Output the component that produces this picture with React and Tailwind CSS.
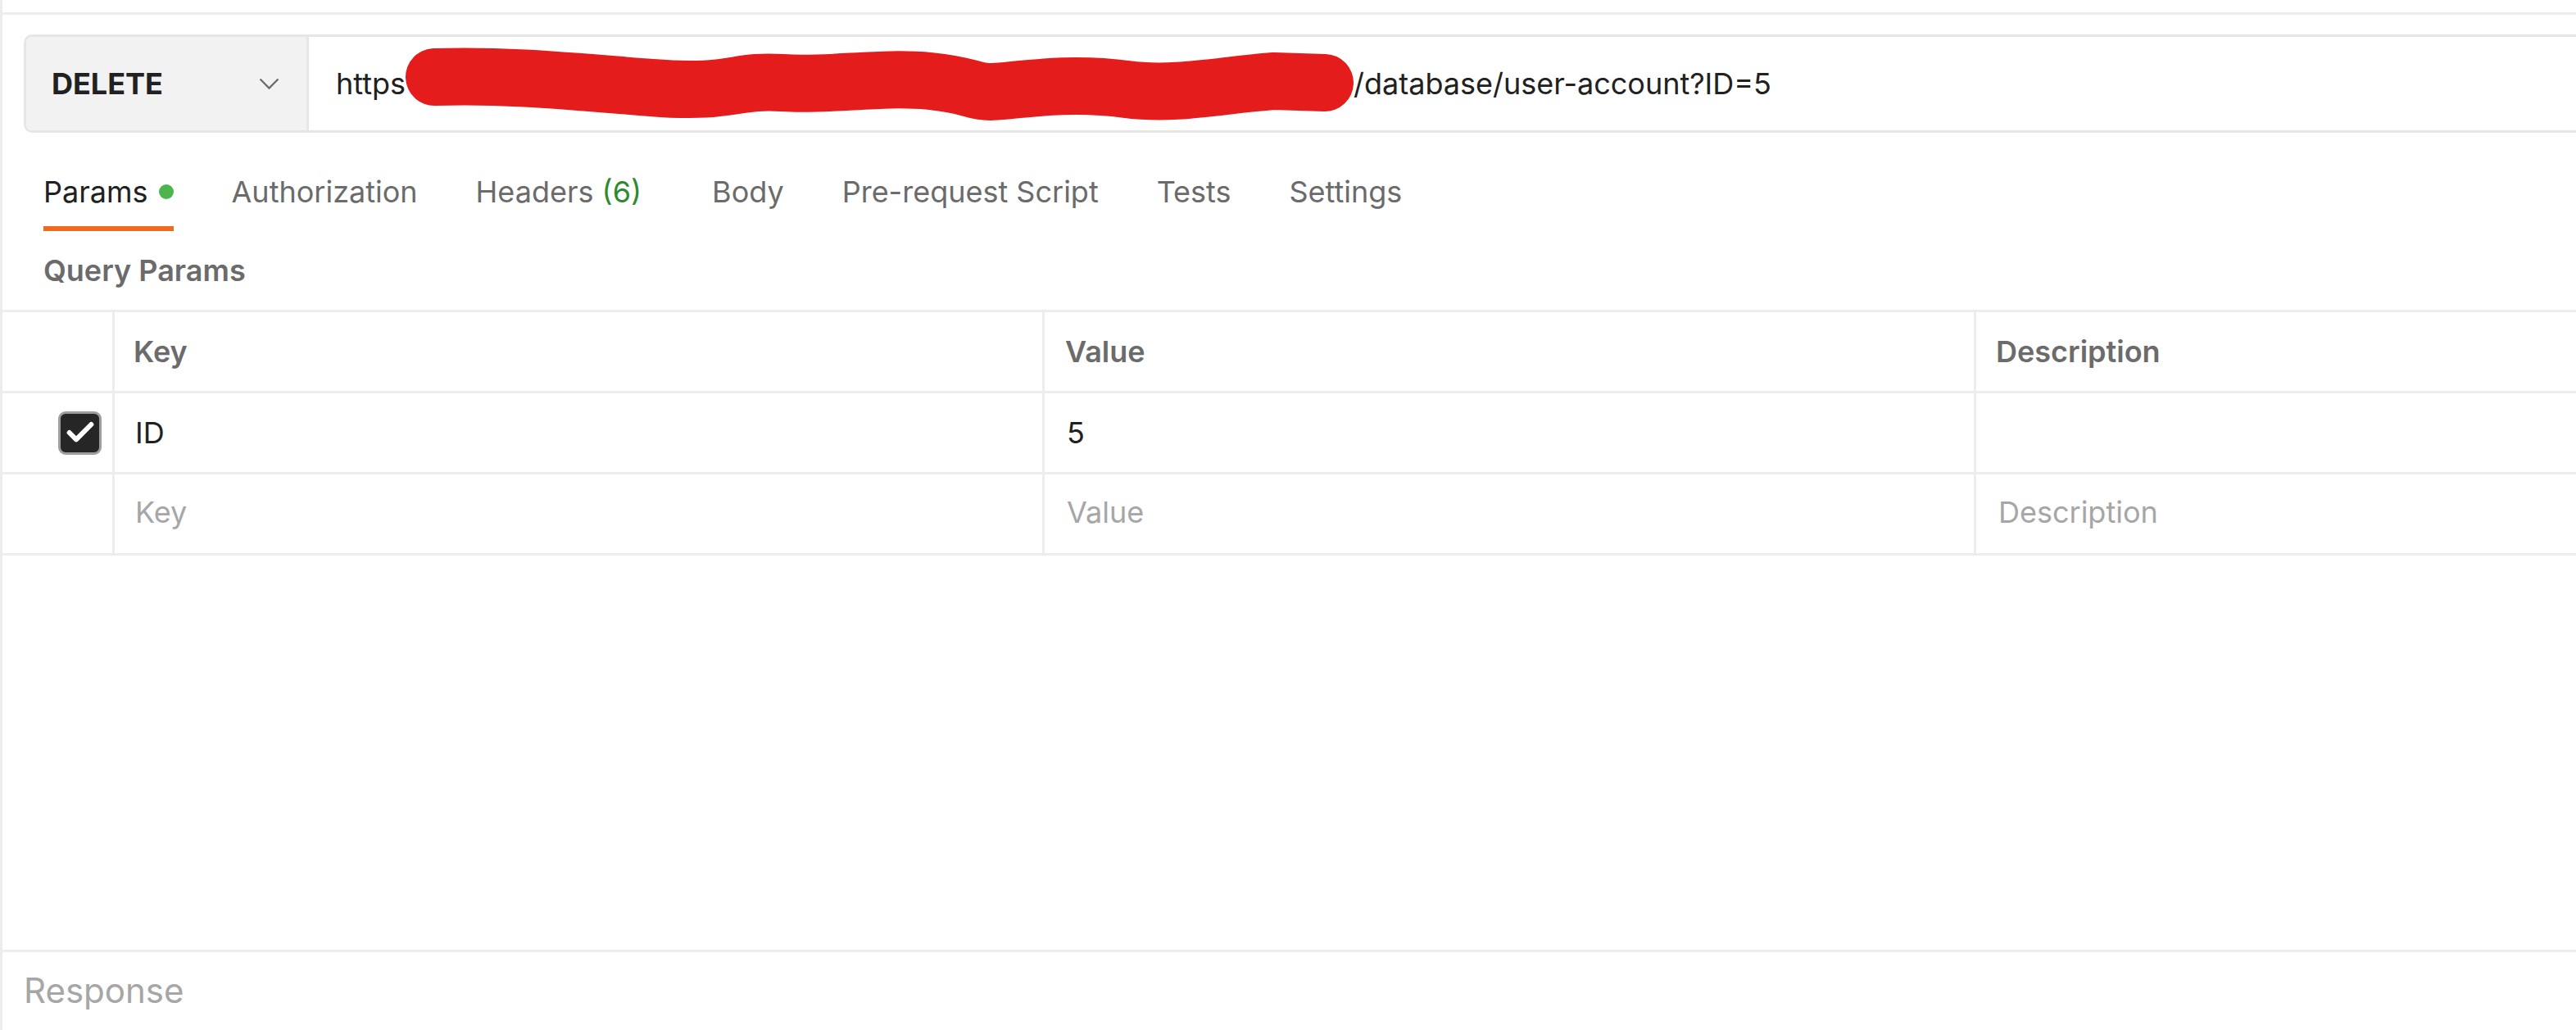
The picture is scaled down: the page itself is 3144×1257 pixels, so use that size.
import { Check } from 'lucide-react'

const tabs = [
  { label: 'Params', active: true, dot: true },
  { label: 'Authorization' },
  { label: 'Headers', count: 6 },
  { label: 'Body' },
  { label: 'Pre-request Script' },
  { label: 'Tests' },
  { label: 'Settings' },
]

const params = [{ key: 'ID', value: '5', description: '', enabled: true }]

export default function RequestBuilder() {
  return (
    <div className="h-[1257px] w-full overflow-hidden bg-white border-l-[3px] border-[#ececec] font-['Inter','Liberation_Sans',sans-serif] flex flex-col">
      {/* Request area */}
      <div className="flex-1 mt-[15px] border-t-[3px] border-[#ededed]">
        {/* URL bar */}
        <div className="mt-[24px] ml-[26px] flex h-[120px] border-[3px] border-r-0 border-[#e6e6e6] rounded-l-[10px] overflow-hidden">
          <div className="w-[345px] shrink-0 bg-[#f2f2f2] border-r-[3px] border-[#e6e6e6] flex items-center justify-between pl-[31px] pr-[33px]">
            <span className="text-[36px] leading-[44px] font-bold text-[#212121]">DELETE</span>
            <svg width="25" height="15" viewBox="0 0 25 15" fill="none">
              <polyline points="1.5,1.5 12.5,12.5 23.5,1.5" stroke="#6b6b6b" strokeWidth="2.3" />
            </svg>
          </div>
          <div className="flex items-center pl-[33px] text-[36px] leading-[44px] text-[#212121] whitespace-nowrap">
            <span>https</span>
            {/* redaction scribble */}
            <svg width="1157" height="110" viewBox="0 0 1157 110" className="shrink-0">
              <path
                d="M35 47 C 120 44, 200 52, 300 60 S 400 50, 460 54 S 580 46, 640 52 S 690 68, 730 64 S 820 54, 880 62 S 1000 56, 1060 52 L 1122 54"
                fill="none"
                stroke="#e41c1c"
                strokeWidth="70"
                strokeLinecap="round"
                strokeLinejoin="round"
              />
            </svg>
            <span>/database/user-account?ID=5</span>
          </div>
        </div>

        {/* Tabs */}
        <div className="mt-[50px] pl-[50px] flex gap-[71px]">
          {tabs.map((tab) => (
            <div key={tab.label} className={`flex flex-col ${tab.count ? 'mr-[15px]' : ''}`}>
              <div
                className={`flex items-center h-[44px] text-[36px] leading-[44px] whitespace-nowrap ${
                  tab.active ? 'text-[#212121]' : 'text-[#6b6b6b]'
                }`}
              >
                {tab.label}
                {tab.count && <span className="ml-[10px] text-[#2f8a2f]">({tab.count})</span>}
                {tab.dot && <span className="ml-[13px] w-[18px] h-[18px] rounded-full bg-[#4bb64b]" />}
              </div>
              <div className={`mt-[20px] h-[6px] ${tab.active ? 'bg-[#ee6b1e]' : ''}`} />
            </div>
          ))}
        </div>

        {/* Query params */}
        <div className="mt-[26px] pl-[50px] text-[36px] leading-[44px] font-semibold text-[#6b6b6b]">Query Params</div>

        <div className="mt-[26px] border-t-[3px] border-[#ededed]">
          <div className="grid grid-cols-[137px_1135px_1137px_1fr] h-[99px] border-b-[3px] border-[#ededed] text-[36px] leading-[44px] font-semibold text-[#6b6b6b]">
            <div className="border-r-[3px] border-[#ededed]" />
            <div className="border-r-[3px] border-[#ededed] flex items-center pl-[23px]">Key</div>
            <div className="border-r-[3px] border-[#ededed] flex items-center pl-[25px]">Value</div>
            <div className="flex items-center pl-[24px]">Description</div>
          </div>

          {params.map((p) => (
            <div
              key={p.key}
              className="grid grid-cols-[137px_1135px_1137px_1fr] h-[99px] border-b-[3px] border-[#ededed] text-[36px] leading-[44px] text-[#212121]"
            >
              <div className="border-r-[3px] border-[#ededed] flex items-center justify-end pr-[13px]">
                <div className="w-[53px] h-[53px] rounded-[9px] border-[3px] border-[#9e9e9e] bg-[#262626] flex items-center justify-center">
                  <Check size={40} strokeWidth={3.6} className="text-white" />
                </div>
              </div>
              <div className="border-r-[3px] border-[#ededed] flex items-center pl-[25px]">{p.key}</div>
              <div className="border-r-[3px] border-[#ededed] flex items-center pl-[27px]">{p.value}</div>
              <div className="flex items-center pl-[27px]">{p.description}</div>
            </div>
          ))}

          {/* Empty row */}
          <div className="grid grid-cols-[137px_1135px_1137px_1fr] h-[99px] border-b-[3px] border-[#ededed] text-[36px] leading-[44px] text-[#a6a6a6]">
            <div className="border-r-[3px] border-[#ededed]" />
            <div className="border-r-[3px] border-[#ededed] flex items-center pl-[25px] pb-[5px]">Key</div>
            <div className="border-r-[3px] border-[#ededed] flex items-center pl-[27px] pb-[5px]">Value</div>
            <div className="flex items-center pl-[27px] pb-[5px]">Description</div>
          </div>
        </div>
      </div>

      {/* Response */}
      <div className="h-[98px] border-t-[3px] border-[#ededed] pt-[21px] pl-[26px] text-[42px] leading-[52px] text-[#a6a6a6]">
        Response
      </div>
    </div>
  )
}
